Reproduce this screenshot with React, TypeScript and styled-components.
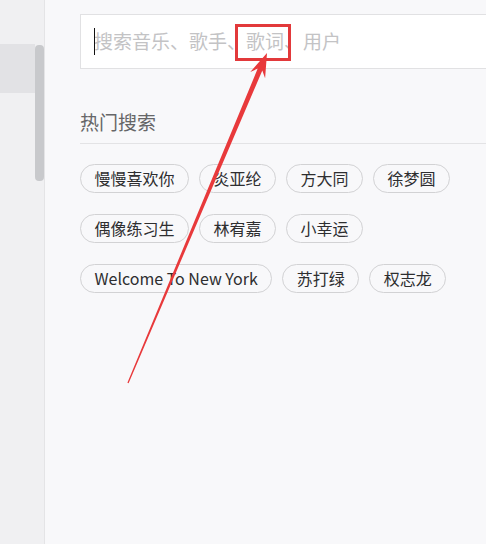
import React from "react";
import styled, { createGlobalStyle } from "styled-components";

const Global = createGlobalStyle`
  html, body { margin: 0; padding: 0; overflow: hidden; }
  body { font-family: "Noto Sans CJK SC", "Noto Sans", sans-serif; }
`;

const Page = styled.div`
  position: relative;
  display: flex;
  width: 486px;
  height: 544px;
  overflow: hidden;
  background: #f8f8fa;
`;

const Sidebar = styled.aside`
  display: flex;
  width: 44px;
  flex-shrink: 0;
  background: #f0f0f2;
  border-right: 1px solid #e4e4e6;
`;

const NavList = styled.div`
  width: 35px;
  padding-top: 44px;
`;

const NavItem = styled.div<{ $active?: boolean }>`
  height: 49px;
  background: ${(p) => (p.$active ? "#e2e2e5" : "transparent")};
`;

const Track = styled.div`
  width: 9px;
  padding-top: 45px;
`;

const Thumb = styled.div`
  height: 136px;
  background: #c8c9cc;
  border-radius: 4px;
`;

const Main = styled.main`
  flex: 1;
  min-width: 0;
  padding: 14px 0 0 35px;
  overflow: hidden;
`;

const Content = styled.div`
  width: 460px;
`;

const SearchBox = styled.div`
  box-sizing: border-box;
  height: 55px;
  display: flex;
  align-items: center;
  padding: 0 0 3px 13px;
  background: #ffffff;
  border: 1px solid #e1e1e3;
`;

const Caret = styled.span`
  display: inline-block;
  width: 1px;
  height: 27px;
  margin: 3px -1px 0 0;
  background: #111;
  position: relative;
  z-index: 1;
`;

const Placeholder = styled.span`
  font-size: 19px;
  line-height: 27px;
  color: #c3c3c5;
  white-space: nowrap;
`;

const Marked = styled.span`
  position: relative;
  display: inline-block;
  height: 27px;
  &::after {
    content: "";
    position: absolute;
    left: -11px;
    top: -3px;
    width: 56px;
    height: 37px;
    box-sizing: border-box;
    border: 3px solid #e2393b;
  }
`;

const SectionTitle = styled.h2`
  margin: 39px 0 0;
  padding-bottom: 8px;
  font-size: 19px;
  line-height: 27px;
  font-weight: 400;
  color: #666668;
  border-bottom: 1px solid #e3e3e5;
`;

const Tags = styled.div`
  display: flex;
  flex-wrap: wrap;
  column-gap: 10px;
  row-gap: 21px;
  margin-top: 21px;
  width: 400px;
  &:first-of-type {
    margin-top: 20px;
  }
`;

const Tag = styled.span`
  box-sizing: border-box;
  height: 29px;
  display: inline-flex;
  align-items: center;
  padding: 0 13.5px 1px;
  border: 1px solid #d2d2d4;
  border-radius: 15px;
  font-size: 16px;
  color: #2e2e30;
  white-space: nowrap;
`;

const TagGroup = styled.div``;

const Arrow = styled.svg`
  position: absolute;
  left: 0;
  top: 0;
  pointer-events: none;
`;

const rows = [
  ["慢慢喜欢你", "炎亚纶", "方大同", "徐梦圆"],
  ["偶像练习生", "林宥嘉", "小幸运"],
  ["Welcome To New York", "苏打绿", "权志龙"],
];

export default function App() {
  return (
    <>
      <Global />
      <Page>
        <Sidebar>
          <NavList>
            <NavItem $active />
          </NavList>
          <Track>
            <Thumb />
          </Track>
        </Sidebar>
        <Main>
          <Content>
            <SearchBox>
              <Caret />
              <Placeholder>
                搜索音乐、歌手、<Marked>歌词、</Marked>用户
              </Placeholder>
            </SearchBox>
            <SectionTitle>热门搜索</SectionTitle>
            <TagGroup>
              {rows.map((row, i) => (
                <Tags key={i}>
                  {row.map((t) => (
                    <Tag key={t}>{t}</Tag>
                  ))}
                </Tags>
              ))}
            </TagGroup>
          </Content>
        </Main>
        <Arrow width="486" height="544" viewBox="0 0 486 544">
          <polygon
            fill="#e8393b"
            points="127.4,382.8 257.7,68.6 250.3,72 267,53 265.1,78.2 262.3,70.6 128.6,383.2"
          />
        </Arrow>
      </Page>
    </>
  );
}
